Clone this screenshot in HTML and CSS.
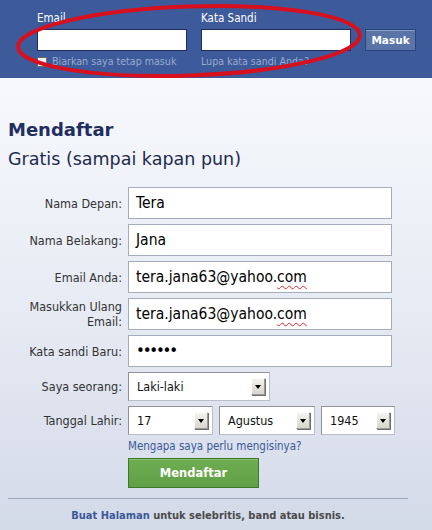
FILE: index.html
```html
<!DOCTYPE html>
<html lang="id">
<head>
<meta charset="utf-8">
<title>Mendaftar</title>
<link rel="stylesheet" href="styles.css">
</head>
<body>
<div class="page">
  <header class="topbar">
    <div class="login">
      <div class="hfield">
        <div class="hlabel">Email</div>
        <div class="hinput"></div>
        <div class="hsub"><span class="chk"></span>Biarkan saya tetap masuk</div>
      </div>
      <div class="hfield">
        <div class="hlabel">Kata Sandi</div>
        <div class="hinput"></div>
        <div class="hsub">Lupa kata sandi Anda?</div>
      </div>
      <div class="masuk">Masuk</div>
    </div>
    <svg class="ring" width="432" height="84" viewBox="0 0 432 84">
      <ellipse cx="189" cy="41" rx="171" ry="34.5" transform="rotate(-2 189 41)" fill="none" stroke="#d8101e" stroke-width="4"/>
    </svg>
  </header>

  <main class="signup">
    <h1 class="title">Mendaftar</h1>
    <p class="subtitle">Gratis (sampai kapan pun)</p>

    <div class="form">
      <div class="lbl">Nama Depan:</div>
      <div class="inp">Tera</div>

      <div class="lbl">Nama Belakang:</div>
      <div class="inp">Jana</div>

      <div class="lbl">Email Anda:</div>
      <div class="inp">tera.jana63@yahoo.<span class="spell">com</span></div>

      <div class="lbl">Masukkan Ulang<br>Email:</div>
      <div class="inp">tera.jana63@yahoo.<span class="spell">com</span></div>

      <div class="lbl">Kata sandi Baru:</div>
      <div class="inp pw">••••••</div>

      <div class="lbl">Saya seorang:</div>
      <div class="sel gender">Laki-laki<span class="arrow"></span></div>

      <div class="lbl">Tanggal Lahir:</div>
      <div class="dates">
        <div class="sel day">17<span class="arrow"></span></div>
        <div class="sel month">Agustus<span class="arrow"></span></div>
        <div class="sel year">1945<span class="arrow"></span></div>
      </div>

      <div></div>
      <div class="why">Mengapa saya perlu mengisinya?</div>

      <div></div>
      <div class="submit">Mendaftar</div>
    </div>

    <div class="sep"></div>
    <p class="pages"><span class="link">Buat Halaman</span> untuk selebritis, band atau bisnis.</p>
  </main>
</div>
</body>
</html>
```

FILE: styles.css
```css
html, body {
  margin: 0;
  padding: 0;
}

body {
  width: 432px;
  height: 530px;
  overflow: hidden;
  font-family: "DejaVu Sans Condensed", "DejaVu Sans", sans-serif;
  font-stretch: condensed;
}

.page {
  height: 530px;
  background: linear-gradient(to bottom, #fafbfd 0%, #f5f7fb 20%, #e6eaf3 60%, #d3dae8 100%);
}

.topbar {
  position: relative;
  height: 78px;
  box-sizing: border-box;
  background: #3d5a9a;
  padding: 11px 0 0 37px;
}

.login {
  display: flex;
  gap: 14px;
}

.hfield {
  width: 150px;
  display: flex;
  flex-direction: column;
}

.hlabel {
  font-size: 11.5px;
  line-height: 14px;
  color: #ffffff;
  margin-bottom: 4px;
}

.hinput {
  height: 22px;
  box-sizing: border-box;
  background: #ffffff;
  border: 1px solid #1f2d5c;
}

.hsub {
  display: flex;
  align-items: center;
  gap: 5px;
  margin-top: 4px;
  white-space: nowrap;
  font-size: 10.6px;
  line-height: 13px;
  color: #9aaacd;
}

.chk {
  flex: none;
  width: 10px;
  height: 10px;
  box-sizing: border-box;
  background: #f4f4f4;
  border: 1px solid #6b6b6b;
}

.masuk {
  margin-top: 18px;
  width: 51px;
  height: 22px;
  box-sizing: border-box;
  display: flex;
  align-items: center;
  justify-content: center;
  background: #5b74a8;
  border: 1px solid #29447e;
  box-shadow: inset 0 1px 0 #8a9cc2;
  color: #ffffff;
  font-family: "DejaVu Sans", sans-serif;
  font-stretch: normal;
  font-weight: bold;
  font-size: 10.5px;
}

.ring {
  position: absolute;
  left: 0;
  top: 0;
  pointer-events: none;
}

.signup {
  padding: 41px 0 0 8px;
}

.title {
  margin: 0;
  font-family: "DejaVu Sans", sans-serif;
  font-stretch: normal;
  font-weight: bold;
  font-size: 18px;
  line-height: 22px;
  color: #1f2f5e;
}

.subtitle {
  margin: 7px 0 0;
  font-family: "DejaVu Sans", sans-serif;
  font-stretch: normal;
  font-size: 17.5px;
  line-height: 22px;
  color: #1c2a50;
}

.form {
  margin-top: 17px;
  display: grid;
  grid-template-columns: 114px auto;
  grid-template-rows: 32px 32px 32px 32px 32px 29px 29px 13px 30px;
  column-gap: 6px;
  row-gap: 5px;
}

.lbl {
  align-self: center;
  text-align: right;
  font-size: 12.5px;
  line-height: 15px;
  color: #333333;
}

.inp {
  width: 264px;
  box-sizing: border-box;
  display: flex;
  align-items: center;
  padding-left: 7px;
  background: #ffffff;
  border: 1px solid #a5adbd;
  font-size: 15.5px;
  color: #000000;
}

.spell {
  text-decoration: underline wavy #e0242a;
  text-decoration-thickness: 1px;
  text-underline-offset: 3px;
}

.pw {
  font-family: "DejaVu Sans", sans-serif;
  font-stretch: normal;
  font-size: 15px;
  letter-spacing: -2.2px;
}

.sel {
  box-sizing: border-box;
  display: flex;
  align-items: center;
  padding-left: 8px;
  background: #ffffff;
  border: 1px solid #b9bec8;
  border-top-color: #8f949c;
  border-left-color: #8f949c;
  font-size: 12.5px;
  color: #111111;
}

.gender { width: 142px; }

.dates {
  display: flex;
  gap: 6px;
}

.day { width: 85px; }
.month { width: 96px; }
.year { width: 74px; }

.arrow {
  margin-left: auto;
  margin-right: 4px;
  width: 14px;
  height: 17px;
  box-sizing: border-box;
  display: flex;
  align-items: center;
  justify-content: center;
  background: linear-gradient(to bottom, #f4f3ee, #d8d5cc);
  border: 1px solid #9b9b9b;
  border-top-color: #ffffff;
  border-left-color: #ffffff;
  box-shadow: 1px 1px 0 #6f6f6f;
}

.arrow::after {
  content: "";
  width: 0;
  height: 0;
  border-left: 3.5px solid transparent;
  border-right: 3.5px solid transparent;
  border-top: 4px solid #000000;
}

.why {
  font-size: 11.5px;
  line-height: 13px;
  color: #3b5998;
}

.submit {
  width: 131px;
  box-sizing: border-box;
  display: flex;
  align-items: center;
  justify-content: center;
  background: linear-gradient(to bottom, #6fad52, #62a047);
  border: 1px solid #3e7a26;
  box-shadow: inset 0 1px 0 #8cc070;
  color: #ffffff;
  font-family: "DejaVu Sans", sans-serif;
  font-stretch: normal;
  font-weight: bold;
  font-size: 11.5px;
}

.sep {
  margin-top: 10px;
  width: 400px;
  height: 1px;
  background: #9ca7bd;
}

.pages {
  margin: 10px 0 0;
  width: 400px;
  text-align: center;
  font-weight: bold;
  font-size: 11px;
  line-height: 14px;
  color: #4a4a4a;
}

.link {
  color: #3b5998;
}
```
